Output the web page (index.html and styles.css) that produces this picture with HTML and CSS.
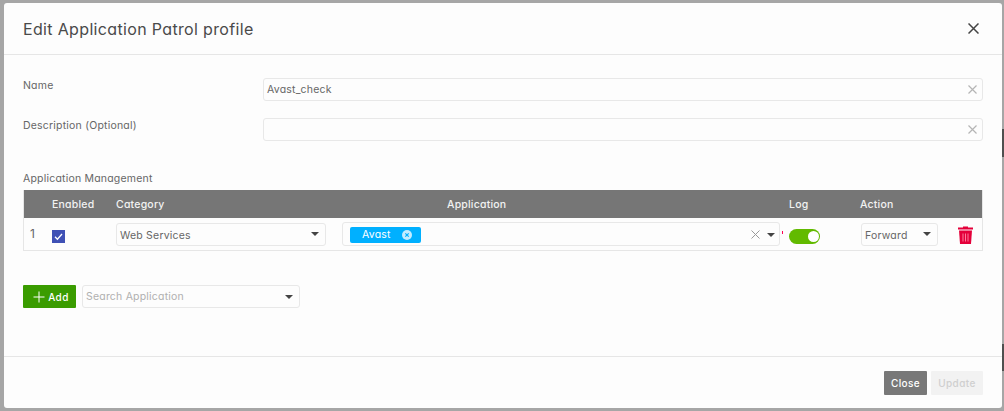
FILE: index.html
```html
<!DOCTYPE html>
<html lang="en">
<head>
<meta charset="utf-8">
<title>Edit Application Patrol profile</title>
<link rel="stylesheet" href="styles.css">
</head>
<body>
<div class="modal">
  <header class="modal-header">
    <h1 class="modal-title">Edit Application Patrol profile</h1>
    <svg class="close-x" width="11" height="11" viewBox="0 0 11 11"><path d="M.5.5L10.5 10.5M10.5.5L.5 10.5" stroke="#444" stroke-width="1.5" fill="none"/></svg>
  </header>
  <main class="modal-body">
    <div class="form-row">
      <label class="field-label">Name</label>
      <div class="text-input"><span>Avast_check</span><svg class="clear" width="9" height="9" viewBox="0 0 9 9"><path d="M.5.5L8.5 8.5M8.5.5L.5 8.5" stroke="#b5b5b5" stroke-width="1.2" fill="none"/></svg></div>
    </div>
    <div class="form-row">
      <label class="field-label">Description (Optional)</label>
      <div class="text-input"><span></span><svg class="clear" width="9" height="9" viewBox="0 0 9 9"><path d="M.5.5L8.5 8.5M8.5.5L.5 8.5" stroke="#b5b5b5" stroke-width="1.2" fill="none"/></svg></div>
    </div>
    <div class="section-label">Application Management</div>
    <div class="table">
      <div class="t-row t-head">
        <span></span>
        <span>Enabled</span>
        <span>Category</span>
        <span class="app-head">Application</span>
        <span>Log</span>
        <span>Action</span>
        <span></span>
      </div>
      <div class="t-row t-body">
        <span class="index">1</span>
        <span class="check"><svg width="13" height="13" viewBox="0 0 13 13"><rect width="13" height="13" fill="#3f51b5"/><path d="M3 6.8L5.4 9.2L10 4" stroke="#fff" stroke-width="1.3" fill="none"/></svg></span>
        <div class="select cat"><span>Web Services</span><i class="caret"></i></div>
        <div class="app-cell">
          <div class="select app">
            <span class="tag">Avast<svg width="10" height="10" viewBox="0 0 10 10"><circle cx="5" cy="5" r="5" fill="#c4ecff"/><path d="M3.3 3.3L6.7 6.7M6.7 3.3L3.3 6.7" stroke="#00b0ff" stroke-width="1.2"/></svg></span>
            <span class="app-end"><svg width="9" height="9" viewBox="0 0 9 9"><path d="M.5.5L8.5 8.5M8.5.5L.5 8.5" stroke="#999" stroke-width="1" fill="none"/></svg><i class="caret"></i></span>
          </div>
          <i class="required-dot"></i>
        </div>
        <span class="toggle"><i class="knob"></i></span>
        <div class="select action"><span>Forward</span><i class="caret"></i></div>
        <svg class="trash" width="15" height="18" viewBox="0 0 15 18"><path d="M5 1.5V.5H10V1.5H15V3.5H0V1.5Z" fill="#e4003a"/><path d="M1 4.5H14L13 18H2Z" fill="#e4003a"/><path d="M5 7.5V15.5M7.5 7.5V15.5M10 7.5V15.5" stroke="#ff8aa8" stroke-width=".9"/></svg>
      </div>
    </div>
    <div class="add-row">
      <button class="btn-add"><svg width="12" height="12" viewBox="0 0 12 12"><path d="M6 .5V11.5M.5 6H11.5" stroke="#fff" stroke-width="1" fill="none"/></svg>Add</button>
      <div class="select search"><span>Search Application</span><i class="caret"></i></div>
    </div>
  </main>
  <footer class="modal-footer">
    <button class="btn btn-close">Close</button>
    <button class="btn btn-update">Update</button>
  </footer>
</div>
</body>
</html>
```
FILE: styles.css
```css
* { box-sizing: border-box; }
html, body { height: 100%; }
body {
  margin: 0;
  height: 411px;
  overflow: hidden;
  padding: 3px 2px 3px 4px;
  background:
    linear-gradient(#a6a6a6 129px, #4f4f4f 129px, #4f4f4f 157px, #a6a6a6 157px, #a6a6a6 344px, #4f4f4f 344px, #4f4f4f 371px, #a6a6a6 371px) right top / 2px 100% no-repeat,
    #a6a6a6;
  font-family: Inter, "Liberation Sans", sans-serif;
  font-feature-settings: "cv11" 1;
  letter-spacing: .2px;
  color: #666;
}
.modal {
  height: 405px;
  background: #fdfdfd;
  border-radius: 3px;
  display: flex;
  flex-direction: column;
}
.modal-header {
  height: 52px;
  flex: none;
  border-bottom: 1px solid #e6e6e6;
  display: flex;
  align-items: center;
  justify-content: space-between;
  padding: 0 23px 0 19px;
}
.modal-title {
  margin: 0;
  font-size: 16px;
  font-weight: 400;
  color: #4a4a4a;
  letter-spacing: .34px;
}
.close-x { display: block; }
.modal-body {
  flex: 1;
  padding: 23px 19px 0;
  font-size: 10.5px;
}
.form-row {
  display: grid;
  grid-template-columns: 240px 720px;
  height: 23px;
  margin-bottom: 17px;
}
.field-label {
  font-size: 10.5px;
  line-height: 14px;
  padding-top: 1px;
}
.text-input {
  height: 23px;
  border: 1px solid #e8e8e8;
  border-radius: 3px;
  padding: 0 5px 0 3px;
  display: flex;
  align-items: center;
  justify-content: space-between;
  font-size: 10.5px;
}
.section-label {
  margin-top: 30px;
  height: 19px;
  line-height: 16px;
  font-size: 10.5px;
}
.table {
  width: 960px;
  border: 1px solid #e6e6e6;
  border-top: 0;
}
.t-row {
  display: grid;
  grid-template-columns: 28px 64px 226px 447px 71px 97px 1fr;
  align-items: center;
}
.t-head {
  height: 28px;
  background: #767676;
  color: #f2f2f2;
  font-size: 10.5px;
  font-weight: 500;
}
.t-head .app-head { padding-left: 105px; }
.t-body { height: 32px; }
.index { font-size: 12px; padding-left: 6px; margin-top: -1px; }
.check { display: flex; margin-top: 4px; }
.check svg { display: block; }
.select {
  height: 23px;
  border: 1px solid #e8e8e8;
  border-radius: 3px;
  display: flex;
  align-items: center;
  justify-content: space-between;
  padding: 0 5px 0 3px;
  font-size: 10.5px;
}
.cat { width: 210px; padding-right: 6px; }
.cat > span, .action > span { padding-top: 3px; }
.app-cell { display: flex; align-items: flex-start; margin-top: -1px; }
.app { width: 438px; height: 24px; padding: 2px 4px 0 7px; }
.required-dot { width: 1px; height: 3px; background: #f05; margin: 9px 0 0 2px; }
.action { width: 77px; margin-left: 1px; padding-right: 6px; }
.caret {
  display: inline-block;
  width: 0;
  height: 0;
  border-left: 4px solid transparent;
  border-right: 4px solid transparent;
  border-top: 4px solid #444;
}
.tag {
  width: 71px;
  height: 16px;
  background: #00b0ff;
  border-radius: 2px;
  color: #fff;
  display: flex;
  align-items: center;
  justify-content: space-between;
  padding: 0 9px 0 12px;
}
.app-end { display: flex; align-items: center; gap: 7px; }
.toggle {
  display: flex;
  justify-content: flex-end;
  align-items: center;
  width: 31px;
  height: 15px;
  margin-top: 4px;
  background: #62ba00;
  border-radius: 8px;
  padding-right: 1px;
}
.knob { width: 11px; height: 11px; background: #fff; border-radius: 50%; }
.trash { display: block; margin: 2px 0 0 1px; }
.add-row {
  display: flex;
  gap: 6px;
  margin-top: 34px;
}
.btn-add {
  width: 53px;
  height: 23px;
  border: 0;
  background: #3a9c00;
  color: #fff;
  border-radius: 1px;
  font: 500 10px Inter, "Liberation Sans", sans-serif;
  font-feature-settings: "cv11" 1;
  letter-spacing: .4px;
  display: flex;
  align-items: center;
  justify-content: center;
  gap: 3px;
  padding: 0 0 0 3px;
}
.search { width: 218px; color: #b0b0b0; padding-right: 6px; }
.modal-footer {
  height: 52px;
  flex: none;
  border-top: 1px solid #e6e6e6;
  display: flex;
  justify-content: flex-end;
  align-items: flex-start;
  gap: 4px;
  padding: 14px 19px 0 0;
}
.btn {
  height: 24px;
  border: 0;
  border-radius: 1px;
  font: 500 10px Inter, "Liberation Sans", sans-serif;
  font-feature-settings: "cv11" 1;
  letter-spacing: .4px;
  padding: 0;
}
.btn-close { width: 43px; background: #787878; color: #fff; }
.btn-update { width: 52px; background: #f2f2f2; color: #cfcfcf; }
```
